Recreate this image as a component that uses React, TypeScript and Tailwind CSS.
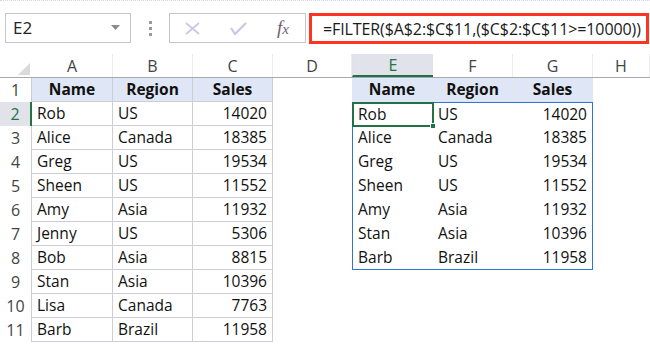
import React from 'react';

type Row = [string, string, string];

const leftRows: Row[] = [
  ['Rob', 'US', '14020'],
  ['Alice', 'Canada', '18385'],
  ['Greg', 'US', '19534'],
  ['Sheen', 'US', '11552'],
  ['Amy', 'Asia', '11932'],
  ['Jenny', 'US', '5306'],
  ['Bob', 'Asia', '8815'],
  ['Stan', 'Asia', '10396'],
  ['Lisa', 'Canada', '7763'],
  ['Barb', 'Brazil', '11958'],
];

const rightRows: Row[] = [
  ['Rob', 'US', '14020'],
  ['Alice', 'Canada', '18385'],
  ['Greg', 'US', '19534'],
  ['Sheen', 'US', '11552'],
  ['Amy', 'Asia', '11932'],
  ['Stan', 'Asia', '10396'],
  ['Barb', 'Brazil', '11958'],
];

const widths = ['w-[81px]', 'w-[80px]', 'w-[80px]', 'w-[79px]', 'w-[81px]', 'w-[80px]', 'w-[80px]', 'flex-1'];
const letters = ['A', 'B', 'C', 'D', 'E', 'F', 'G', 'H'];
const header: Row = ['Name', 'Region', 'Sales'];

// content for row r (1..11), column c (0..7)
function cellText(r: number, c: number): string {
  if (c <= 2) {
    if (r === 1) return header[c];
    return leftRows[r - 2]?.[c] ?? '';
  }
  if (c >= 4 && c <= 6) {
    if (r === 1) return header[c - 4];
    return rightRows[r - 2]?.[c - 4] ?? '';
  }
  return '';
}

function cellClass(r: number, c: number): string {
  const cls: string[] = [widths[c], 'h-full flex items-center shrink-0'];
  const isSales = c === 2 || c === 6;

  if (r === 1 && ((c >= 0 && c <= 2) || (c >= 4 && c <= 6))) {
    cls.push('bg-[#dfe6f5] font-bold justify-center');
  } else if (isSales) {
    cls.push('justify-end pr-[5px]');
  } else {
    cls.push('pl-[5px]');
  }

  if (c <= 2) cls.push('border-r border-b border-[#cdcdd6]');
  if (c >= 4 && c <= 6) {
    if (r === 1) cls.push('border-r border-[#e4e4ea]');
    if (r >= 2 && r <= 8) {
      if (c === 4) cls.push('border-l border-l-[#2f74d0]');
      if (c === 6) cls.push('border-r border-r-[#2f74d0]');
      if (r === 2) cls.push('border-t border-t-[#2f74d0]');
      if (r === 8) cls.push('border-b border-b-[#2f74d0]');
    }
  }
  return cls.join(' ');
}

function FxBar() {
  return (
    <div className="h-[54px] flex items-start pt-[12px] border-t border-dotted border-[#d4d4f0]">
      <div className="ml-[5px] w-[126px] h-[30px] border border-[#c4c4cc] flex items-center justify-between pl-[7px] pr-[10px]">
        <span className="text-[17px] text-[#222]">E2</span>
        <svg width="9" height="6" viewBox="0 0 9 6">
          <path d="M0 0 H9 L4.5 5 Z" fill="#8a8a92" />
        </svg>
      </div>
      <div className="w-[38px] h-[30px] flex flex-col items-center justify-center gap-[3px]">
        <div className="w-[3px] h-[3px] bg-[#9a9a9a]" />
        <div className="w-[3px] h-[3px] bg-[#9a9a9a]" />
        <div className="w-[3px] h-[3px] bg-[#9a9a9a]" />
      </div>
      <div className="w-[137px] h-[30px] border border-[#c4c4cc] flex items-center pl-[15px] gap-[30px]">
        <svg width="15" height="13" viewBox="0 0 15 13">
          <path d="M1 1 L14 12 M14 1 L1 12" stroke="#c8c8e6" strokeWidth="1.7" fill="none" />
        </svg>
        <svg width="17" height="13" viewBox="0 0 17 13">
          <path d="M1 6 L5 12 L16 1" stroke="#c8c8e6" strokeWidth="2.2" fill="none" />
        </svg>
        <span className="italic text-[19px] text-[#6e5d78] font-['Liberation_Serif',serif]">
          f<span className="text-[15px]">x</span>
        </span>
      </div>
      <div className="ml-[3px] w-[340px] h-[31px] border-[3px] border-[#ff3322] flex items-center pl-[11px]">
        <span className="text-[16px] text-[#1a1a1a] whitespace-nowrap tracking-[-0.1px]">
          =FILTER($A$2:$C$11,($C$2:$C$11&gt;=10000))
        </span>
      </div>
    </div>
  );
}

export default function App() {
  const rows = Array.from({ length: 11 }, (_, i) => i + 1);
  return (
    <div className="w-[650px] h-[344px] bg-white overflow-hidden font-['Open_Sans',sans-serif] text-[15.5px] text-[#111]">
      <FxBar />

      {/* column letters */}
      <div className="flex h-[24px] border-b border-[#a8a8ae] text-[#444] text-[16px]">
        <div className="w-[32px] h-full relative">
          <svg className="absolute right-[2px] bottom-[2px]" width="12" height="12" viewBox="0 0 12 12">
            <path d="M12 0 V12 H0 Z" fill="#dadada" />
          </svg>
        </div>
        {letters.map((l, c) => (
          <div
            key={l}
            className={
              c === 4
                ? `${widths[c]} h-full flex items-center justify-center bg-[#e2e3ea] border-b-2 border-[#217346] text-[#217346] border-l border-l-[#e0e0e6]`
                : `${widths[c]} h-full flex items-center justify-center border-r border-[#ececf0]`
            }
          >
            {l}
          </div>
        ))}
      </div>

      {rows.map(r => (
        <div key={r} className="flex h-[24px]">
          <div
            className={
              r === 2
                ? 'w-[32px] h-full shrink-0 flex items-center justify-center bg-[#e2e3ea] border-r-2 border-[#217346] text-[#217346] text-[16px]'
                : 'w-[32px] h-full shrink-0 flex items-center justify-center border-r border-[#cdcdd6] text-[#444] text-[16px]'
            }
          >
            {r}
          </div>
          {letters.map((l, c) => (
            <div key={l} className={`${cellClass(r, c)} ${r === 2 && c === 4 ? 'relative' : ''}`}>
              {cellText(r, c)}
              {r === 2 && c === 4 && (
                <div className="absolute inset-[-1px] border-2 border-[#217346]">
                  <div className="absolute right-[-4px] bottom-[-4px] w-[6px] h-[6px] bg-[#217346] border border-white" />
                </div>
              )}
            </div>
          ))}
        </div>
      ))}
    </div>
  );
}
